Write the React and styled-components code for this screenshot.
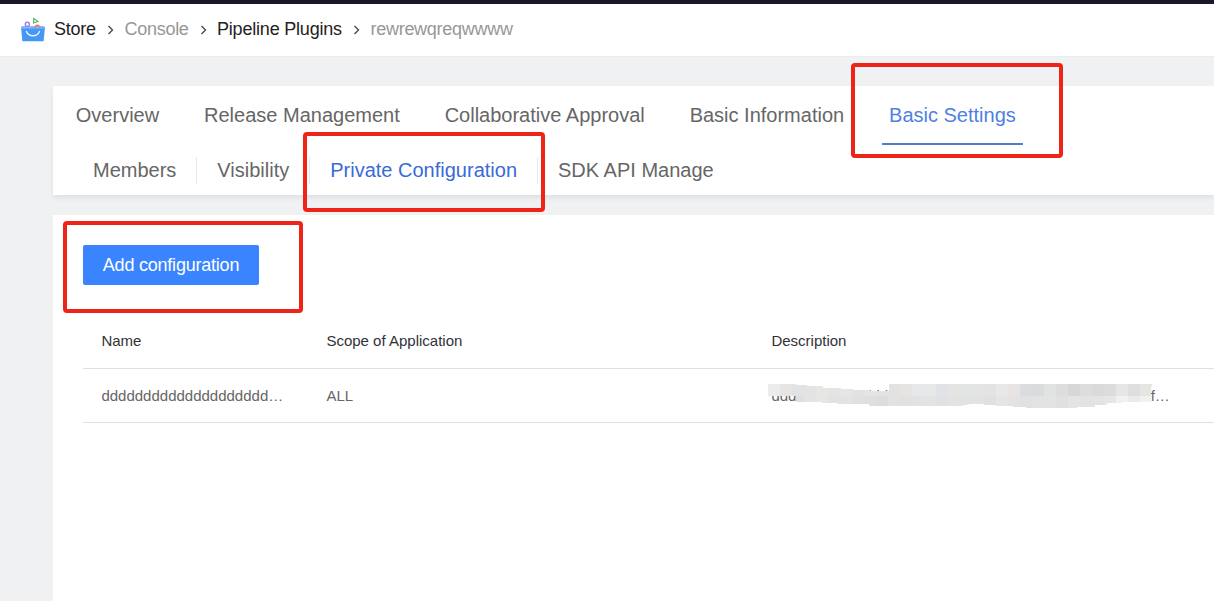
import React from "react";
import styled, { createGlobalStyle } from "styled-components";

const GlobalStyle = createGlobalStyle`
  * { box-sizing: border-box; }
  body {
    margin: 0;
    overflow: hidden;
    background: #f0f1f3;
    font-family: "Liberation Sans", Arial, sans-serif;
    color: #666;
  }
`;

const Page = styled.div`
  position: relative;
  display: flex;
  flex-direction: column;
  width: 1214px;
  height: 601px;
  overflow: hidden;
  background: #f0f1f3;
`;

const Header = styled.header`
  display: flex;
  align-items: center;
  flex: none;
  height: 57px;
  padding: 0 0 2px 20px;
  border-top: 4px solid #18182a;
  border-bottom: 1px solid #eaebed;
  background: #fff;
`;

const Crumb = styled.span`
  width: ${(p) => p.$width}px;
  font-size: 18px;
  line-height: 24px;
  white-space: nowrap;
  letter-spacing: ${(p) => p.$tracking ?? -0.28}px;
  color: ${(p) => (p.$muted ? "#979797" : "#222")};
`;

const LogoIcon = styled.svg`
  flex: none;
  margin: 0 8px 0 0;
`;

const Chevron = styled.svg`
  flex: none;
  margin: 2px 10.5px 0 11px;
`;

const Content = styled.main`
  display: flex;
  flex: 1;
  flex-direction: column;
  gap: 20px;
  padding: 29px 0 0 53px;
`;

const TabPanel = styled.section`
  flex: none;
  height: 109px;
  background: #fff;
  box-shadow: 0 3px 5px rgba(0, 0, 0, 0.07);
`;

const MainTabs = styled.nav`
  display: flex;
  gap: 29.9px;
  height: 59px;
  padding-left: 15.3px;
`;

const MainTab = styled.a`
  height: 59px;
  padding: 0 7.5px;
  font-size: 20px;
  line-height: 58px;
  white-space: nowrap;
  color: ${(p) => (p.$active ? "#4f7fe3" : "#666")};
  border-bottom: 2px solid ${(p) => (p.$active ? "#4f7fc9" : "transparent")};
`;

const SubTabs = styled.nav`
  display: flex;
  padding: 12px 0 0 20px;
`;

const SubTab = styled.a`
  height: 27px;
  padding: 0 20px;
  font-size: 20px;
  line-height: 26px;
  white-space: nowrap;
  color: ${(p) => (p.$active ? "#3a6ad6" : "#666")};
  border-right: 1px solid #e6e7ea;
  &:last-child { border-right: 0; }
`;

const Body = styled.section`
  flex: 1;
  padding: 30px 0 0 30px;
  background: #fff;
`;

const PrimaryButton = styled.button`
  display: block;
  width: 176px;
  height: 40px;
  padding: 0;
  border: 0;
  border-radius: 2px;
  background: #3a84ff;
  color: #fff;
  font: 18px/40px "Liberation Sans", Arial, sans-serif;
  letter-spacing: -0.22px;
`;

const Table = styled.div`
  margin-top: 29px;
`;

const Row = styled.div`
  display: grid;
  grid-template-columns: 225px 445px 1fr;
  height: ${(p) => (p.$head ? 55 : 54)}px;
  padding-left: 18.4px;
  border-bottom: 1px solid #dfe0e2;
  font-size: 15px;
  line-height: 53px;
  color: ${(p) => (p.$head ? "#313238" : "#666")};
`;

const Cell = styled.div`
  position: relative;
  white-space: nowrap;
`;

const Redaction = styled.svg`
  position: absolute;
  left: -3.4px;
  top: 15px;
`;

const Highlight = styled.div`
  position: absolute;
  left: ${(p) => p.$x}px;
  top: ${(p) => p.$y}px;
  width: ${(p) => p.$w}px;
  height: ${(p) => p.$h}px;
  border: 4px solid #ee2419;
  border-radius: 4px;
  pointer-events: none;
`;

function Logo() {
  return (
    <LogoIcon width="26" height="26" viewBox="0 0 26 26" fill="none">
      <path d="M1 11h24l-1.4 14.2H2.4z" fill="#4696f5" />
      <path d="M2 10h22l1 2.5H1z" fill="#82b8f5" />
      <circle cx="7.3" cy="8.3" r="2.1" fill="#f6f1ff" stroke="#9a74e8" strokeWidth="1.2" />
      <path d="M13.9 2.4l3.9 3.2-4.2 1.4z" stroke="#4eb765" strokeWidth="1.2" />
      <path d="M15.2 11.6a2.3 2.3 0 0 1 4.6 0" stroke="#ed7b54" strokeWidth="1.4" />
      <path d="M6.5 15.5c2.2 5.7 10.6 5.7 13 0" stroke="#e5f4ff" strokeWidth="1.4" strokeLinecap="round" />
    </LogoIcon>
  );
}

function Separator() {
  return (
    <Chevron width="7" height="10" viewBox="0 0 7 10" fill="none">
      <path d="M1.5 1l4 4-4 4" stroke="#444" strokeWidth="1.3" />
    </Chevron>
  );
}

const upperTiles = "ebeded e6e5e4 e2e2e2 e3e3e3 e6e6e3 e3e5e5 e6e6e6 e2e2e0 e5e5e5 e3e3e3 e2e2e3 e6e3e2 e4e8ea e6e7e7 e1e2e5 e5e4e4 e3e5e5 e5e4e4 e3e3e3 e8e8e8 e6e5e4 dbdcde dadbdb e0e2e4 dddddd d7d7d7 dddddc dadada dbdddc e5e6e5 dedede e5e5e2".split(" ");
const lowerTiles = "ebeded e6e5e4 dfdfdf e3e3e3 e6e6e3 e1e2e2 e3e3e3 e0e0e0 dfdfdf dddddd e2e2e2 e3e1e0 e1e3e3 e2e3e3 e0e1e4 e3e3e3 e1e3e3 e3e3e3 e0e0e0 e5e5e5 e5e2e1 e0e1e4 e3e3e3 e3e3e3 e0e0e0 e4e4e4 e5e3e2 e3e3e3 e6e6e6 f1f1f1 ebebeb f0f0f0".split(" ");

function RedactedRun() {
  return (
    <Redaction width="386" height="26" viewBox="0 0 386 26" shapeRendering="crispEdges">
      <clipPath id="smudge">
        <path d="M0 0H27L30 1H39V2H55V4H73V5H85V6H102V7H121V0H386L383 3V18H354V19H339V21H327V23H309V24H258V23H245V22H228V21H216V20H203L192 22H101V20H70V19H54V18H28V12H0z" />
      </clipPath>
      <g clipPath="url(#smudge)">
        {upperTiles.map((c, i) => <rect key={i} x={i * 12} y="0" width="12" height="12" fill={"#" + c} />)}
        {lowerTiles.map((c, i) => <rect key={i} x={i * 12} y="12" width="12" height="14" fill={"#" + c} />)}
      </g>
    </Redaction>
  );
}

export default function App() {
  return (
    <Page>
      <GlobalStyle />
      <Header>
        <Logo />
        <Crumb $width={42}>Store</Crumb>
        <Separator />
        <Crumb $width={64} $muted>Console</Crumb>
        <Separator />
        <Crumb $width={125} $tracking={-0.2}>Pipeline Plugins</Crumb>
        <Separator />
        <Crumb $width={143} $muted>rewrewqreqwwww</Crumb>
      </Header>
      <Content>
        <TabPanel>
          <MainTabs>
            <MainTab>Overview</MainTab>
            <MainTab>Release Management</MainTab>
            <MainTab>Collaborative Approval</MainTab>
            <MainTab>Basic Information</MainTab>
            <MainTab $active>Basic Settings</MainTab>
          </MainTabs>
          <SubTabs>
            <SubTab>Members</SubTab>
            <SubTab>Visibility</SubTab>
            <SubTab $active>Private Configuration</SubTab>
            <SubTab>SDK API Manage</SubTab>
          </SubTabs>
        </TabPanel>
        <Body>
          <PrimaryButton>Add configuration</PrimaryButton>
          <Table>
            <Row $head>
              <Cell>Name</Cell>
              <Cell>Scope of Application</Cell>
              <Cell>Description</Cell>
            </Row>
            <Row>
              <Cell>dddddddddddddddddddd…</Cell>
              <Cell>ALL</Cell>
              <Cell>
                {"d".repeat(45)}ff…
                <RedactedRun />
              </Cell>
            </Row>
          </Table>
        </Body>
      </Content>
      <Highlight $x={851} $y={63} $w={212} $h={95} />
      <Highlight $x={303} $y={132} $w={242} $h={80} />
      <Highlight $x={63} $y={221} $w={240} $h={92} />
    </Page>
  );
}
